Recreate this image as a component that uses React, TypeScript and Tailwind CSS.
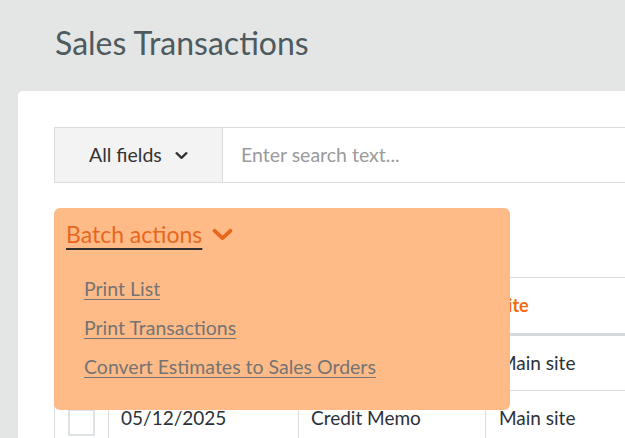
const rows = [
    { date: "05/13/2025", type: "Invoice", site: "Main site" },
    { date: "05/12/2025", type: "Credit Memo", site: "Main site" },
];

function Chevron({ className }: { className?: string }) {
    return (
        <svg viewBox="0 0 20 12" className={className} fill="none" stroke="currentColor" strokeWidth="3.6" strokeLinecap="round" strokeLinejoin="round">
            <polyline points="2.5,2.5 10,9.5 17.5,2.5" />
        </svg>
    );
}

export default function App() {
    return (
        <div className="w-[625px] h-[438px] overflow-hidden bg-[#e4e6e5] font-['Lato',sans-serif]">
            <h1 className="pl-[55px] pt-[24px] h-[91px] text-[32px] leading-[38px] text-[#4d5a60]">
                Sales Transactions
            </h1>

            <div className="ml-[18px] h-[400px] bg-white rounded-tl-[5px] pl-[36px] pt-[36px]">
                {/* Search */}
                <div className="flex h-[56px]">
                    <div className="w-[169px] shrink-0 flex items-center bg-[#f3f3f3] border border-[#dcdcdc] pl-[34px] text-[19.5px] text-[#333]">
                        <span>All fields</span>
                        <Chevron className="w-[13px] h-[9px] ml-[13px] text-[#333]" />
                    </div>
                    <div className="flex-1 flex items-center border-y border-[#dcdcdc] pl-[18px] text-[19.5px] text-[#9a9a9a]">
                        Enter search text...
                    </div>
                </div>

                {/* Toolbar */}
                <div className="relative h-[94px]">
                    <div className="absolute z-10 left-0 top-[25px] w-[456px] h-[202px] bg-[#ffbb87] rounded-[6px]">
                        <div className="flex items-center gap-[10px] pl-[12px] pt-[11px]">
                            <span className="text-[23px] leading-[30px] text-[#e8671c] underline decoration-[#2f2f2f] decoration-2 underline-offset-[5px]">
                                Batch actions
                            </span>
                            <Chevron className="w-[21px] h-[13px] text-[#e8671c]" />
                        </div>
                        <div className="flex flex-col gap-[15px] pl-[30px] pt-[28px] text-[19.5px] leading-[24px] text-[#747474]">
                            <a className="underline underline-offset-[3px] decoration-[#747474] w-fit">Print List</a>
                            <a className="underline underline-offset-[3px] decoration-[#747474] w-fit">Print Transactions</a>
                            <a className="underline underline-offset-[3px] decoration-[#747474] w-fit">
                                Convert Estimates to Sales Orders
                            </a>
                        </div>
                    </div>
                </div>

                {/* Table */}
                <div className="border-l border-[#d8dee2]">
                    <div className="flex h-[59px] border-t border-[#d8dee2] border-b-[3px] border-b-[#d4d9dc] text-[18px] font-bold text-[#f26a0c]">
                        <div className="w-[53px] shrink-0"></div>
                        <div className="w-[190px] shrink-0 flex items-center px-[13px]">Date</div>
                        <div className="w-[187px] shrink-0 flex items-center px-[13px]">Type</div>
                        <div className="flex-1 flex items-center px-[13px]">Site</div>
                    </div>
                    {rows.map((r, i) => (
                        <div key={i} className="flex h-[55px] border-b border-[#d8dee2] text-[19px] text-[#2b3138]">
                            <div className="w-[53px] shrink-0 pl-[13px] pt-[18px]">
                                <div className="w-[27px] h-[27px] border-2 border-[#dde2e6] bg-white"></div>
                            </div>
                            <div className="w-[190px] shrink-0 flex items-center px-[12px] border-l border-[#d8dee2]">{r.date}</div>
                            <div className="w-[187px] shrink-0 flex items-center px-[12px] border-l border-[#d8dee2]">{r.type}</div>
                            <div className="flex-1 flex items-center px-[13px] border-l border-[#d8dee2]">{r.site}</div>
                        </div>
                    ))}
                </div>
            </div>
        </div>
    );
}
